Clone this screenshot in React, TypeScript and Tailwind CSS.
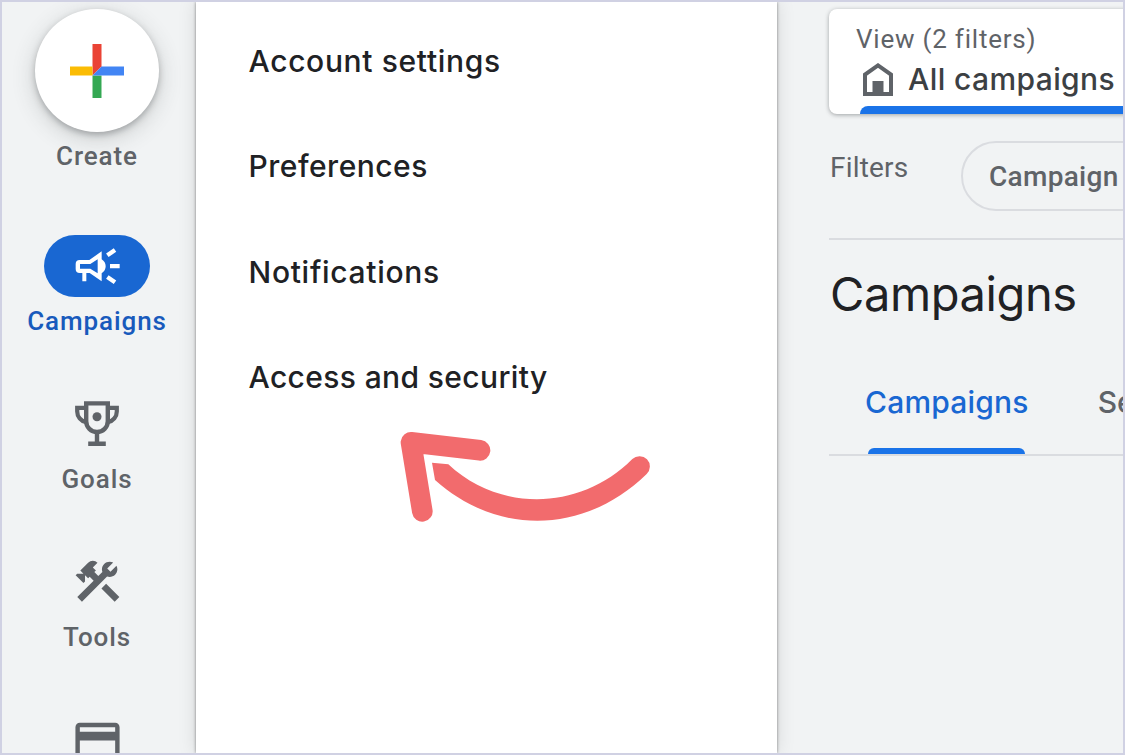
import * as React from "react";
import { MdConstruction, MdCreditCard } from "react-icons/md";

function PlusIcon() {
  return (
    <svg width="54" height="54" viewBox="0 0 54 54">
      <path d="M22.5 0h9v22.5l-9 9z" fill="#ea4335" />
      <path d="M0 22.5h22.5v9H0z" fill="#fbbc04" />
      <path d="M22.5 31.5h9V54h-9z" fill="#34a853" />
      <path d="M31.5 22.5H54v9H22.5z" fill="#4285f4" />
    </svg>
  );
}

function MegaphoneIcon() {
  return (
    <svg width="47" height="37" viewBox="220 82 141 111" fill="none">
      <path
        fillRule="evenodd"
        d="M237 118h29l37-26v24q12 8 12 21t-12 21v24l-36-25h-10v25h-12v-25h-8q-12 0-12-12v-15q0-12 12-12zM238 130v14h31l22 14v-42l-22 14z"
        fill="currentColor"
      />
      <path
        d="M320 104l23-16M328 136.500h29M320 169l23 16"
        stroke="currentColor"
        strokeWidth="13"
      />
    </svg>
  );
}

function TrophyIcon() {
  return (
    <svg width="44" height="45" viewBox="0 0 44 45" fill="none">
      <path
        d="M11.2 2.4h21.6v17.8a10.8 10.8 0 0 1-21.6 0z"
        stroke="currentColor"
        strokeWidth="4.4"
      />
      <path
        d="M10 6.8H2.2v3.600c0 5.200 3.600 9.800 9 10.800M34 6.800h7.800v3.600c0 5.200-3.600 9.800-9 10.800"
        stroke="currentColor"
        strokeWidth="4.2"
      />
      <circle cx="22" cy="15.800" r="4.500" fill="currentColor" />
      <path d="M19.800 31h4.400v9.500h6.600V45H13.200v-4.500h6.600z" fill="currentColor" />
    </svg>
  );
}

function HomeIcon() {
  return (
    <svg
      className="-mt-px"
      width="30"
      height="33"
      viewBox="0 0 30 33"
      fill="none"
    >
      <path d="M2 31V11.500L15 2.400l13 9.100V31z" stroke="#5f6368" strokeWidth="4" />
      <path d="M9.500 18h11v13h-11z" fill="#5f6368" />
    </svg>
  );
}

function Arrow() {
  return (
    <svg
      className="absolute top-[408px] left-[184px]"
      width="290"
      height="130"
      viewBox="0 0 870 390"
      fill="none"
    >
      <path
        d="M300 121L93 97l34 207"
        stroke="#f26b6d"
        strokeWidth="62"
        strokeLinecap="round"
        strokeLinejoin="round"
      />
      <path
        d="M156 158L205 163C355 305 600 305 757 147A31 31 0 0 1 800 192C610 376 350 376 165 210z"
        fill="#f26b6d"
      />
    </svg>
  );
}

function NavItem({
  label,
  active,
  children,
}: {
  label?: React.ReactNode;
  active?: boolean;
  children: React.ReactNode;
}) {
  return (
    <div className="flex h-[158px] shrink-0 flex-col items-center text-[#5f6368]">
      <div
        className={
          active
            ? "flex h-[62px] w-[106px] items-center justify-center rounded-full bg-[#1967d2] text-white"
            : "flex h-[62px] w-[106px] items-center justify-center pb-[2px]"
        }
      >
        {children}
      </div>
      {label && <div className="mt-[9px] leading-[30px]">{label}</div>}
    </div>
  );
}

const settings = [
  { label: "Account settings", className: "tracking-[0.65px]" },
  { label: "Preferences", className: "tracking-[0.5px]" },
  { label: "Notifications", className: "tracking-[0.7px]" },
  { label: "Access and security", className: "tracking-[0.37px]" },
];

export default function App() {
  return (
    <div className="flex h-[755px] w-[1125px] overflow-hidden border-2 border-[#d0d1e3] bg-[#f1f3f4] font-[Roboto,sans-serif]">
      <div className="flex w-[194px] shrink-0 flex-col items-center pt-[7px] pr-1 text-[26px] font-medium tracking-[0.9px] text-[#5f6368]">
        <div className="flex h-[123px] w-[124px] shrink-0 items-center justify-center rounded-full bg-white shadow-[0_3px_6px_rgba(60,64,67,0.35),0_6px_20px_4px_rgba(60,64,67,0.15)]">
          <PlusIcon />
        </div>
        <div className="mt-[9px] leading-[30px]">Create</div>
        <div className="mt-[64px] flex flex-col">
          <NavItem
            active
            label={<span className="text-[#185abc]">Campaigns</span>}
          >
            <MegaphoneIcon />
          </NavItem>
          <NavItem label="Goals">
            <TrophyIcon />
          </NavItem>
          <NavItem label="Tools">
            <MdConstruction size={53} />
          </NavItem>
          <NavItem>
            <MdCreditCard size={53} className="mt-[2px]" />
          </NavItem>
        </div>
      </div>

      <div className="relative z-10 w-[581px] shrink-0 bg-white pt-[7px] pl-[52.5px] font-[Inter,sans-serif] text-[30px] font-medium text-[#202124] shadow-[0_0_3px_rgba(0,0,0,0.45),0_0_18px_rgba(0,0,0,0.12)]">
        {settings.map((item) => (
          <div key={item.label} className="flex h-[105.3px] items-center">
            <span className={item.className}>{item.label}</span>
          </div>
        ))}
        <Arrow />
      </div>

      <div className="min-w-0 flex-1 overflow-hidden pl-[52px] whitespace-nowrap">
        <div className="mt-[7px] flex h-[105px] w-[340px] flex-col rounded-lg bg-white pt-[14px] shadow-[0_1px_4px_rgba(60,64,67,0.45)]">
          <div className="pl-[27px] text-[26px] leading-[32px] tracking-[0.78px] text-[#5f6368]">
            View (2 filters)
          </div>
          <div className="flex h-[51px] items-center pb-[2px] pl-[34px]">
            <HomeIcon />
            <span className="ml-[15px] font-[Inter,sans-serif] text-[30px] font-medium tracking-[0.4px] text-[#3c4043]">
              All campaigns
            </span>
          </div>
          <div className="ml-[31px] h-2 rounded-tl-lg bg-[#1a73e8]" />
        </div>

        <div className="mt-[27px] flex h-[70px]">
          <div className="w-[132px] shrink-0 pt-[11px] pl-px text-[28px] leading-[32px] tracking-[0.2px] text-[#5f6368]">
            Filters
          </div>
          <div className="flex h-[70px] w-[260px] shrink-0 items-center rounded-full border-2 border-[#dadce0] pt-px pl-[26px] text-[28px] font-medium tracking-[0.3px] text-[#5f6368]">
            Campaign
          </div>
        </div>

        <div className="mt-[27px] h-[2px] bg-[#dadce0]" />

        <h1 className="mt-[24px] pl-px font-[Inter,sans-serif] text-[47px] leading-[60px] tracking-[-0.4px] text-[#202124]">
          Campaigns
        </h1>

        <div className="mt-[48px] flex h-[84px] border-b-2 border-[#dadce0] font-[Inter,sans-serif] text-[30px] leading-[60px] font-medium">
          <div className="ml-[36px] flex h-[82px] w-[165px] flex-col items-center">
            <div className="tracking-[0.2px] text-[#1967d2]">Campaigns</div>
            <div className="mt-auto h-[6px] w-[157px] rounded-t-md bg-[#1a73e8]" />
          </div>
          <div className="ml-[69px] text-[#5f6368]">Segments</div>
        </div>
      </div>
    </div>
  );
}
